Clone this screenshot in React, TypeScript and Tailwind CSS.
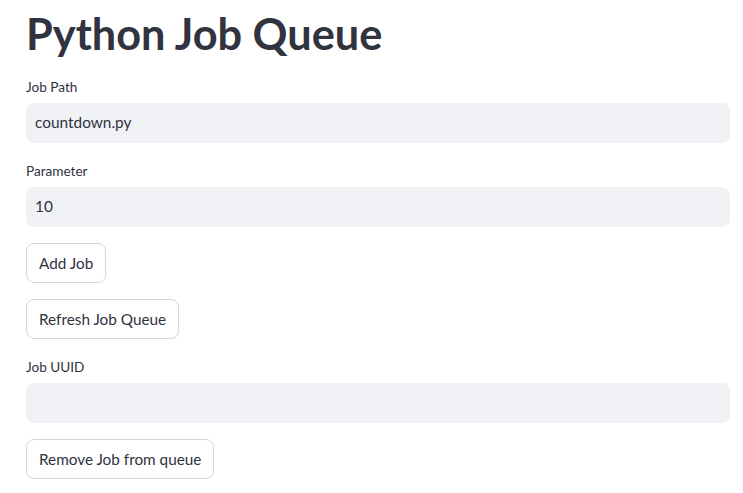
import React from 'react';

const font = { fontFamily: '"Source Sans Pro", Lato, "Noto Sans", sans-serif' };

const Label: React.FC<{ text: string; className?: string }> = ({ text, className }) => (
  <div className={`h-5 flex items-center text-[13.6px] text-[#31333f] ${className ?? ''}`}>{text}</div>
);

const Field: React.FC<{ value: string }> = ({ value }) => (
  <div className="mt-[6px] h-10 w-full rounded-lg bg-[#f0f2f6] flex items-center pl-[9px] text-[15.4px] text-[#31333f]">
    {value}
  </div>
);

const Button: React.FC<{ text: string; className?: string }> = ({ text, className }) => (
  <button
    className={`self-start h-10 px-3 rounded-lg border border-[#d6d6d9] bg-white text-[15.3px] text-[#31333f] ${className ?? ''}`}
  >
    {text}
  </button>
);

export default function App() {
  return (
    <div
      className="min-h-[493px] w-full bg-white pl-[26px] pr-[13px] flex flex-col"
      style={font}
    >
      <h1 className="h-[68px] flex items-center text-[43.3px] font-bold text-[#31333f] leading-none">
        Python Job Queue
      </h1>
      <Label text="Job Path" className="mt-[9px]" />
      <Field value="countdown.py" />
      <Label text="Parameter" className="mt-[18px]" />
      <Field value="10" />
      <Button text="Add Job" className="mt-4" />
      <Button text="Refresh Job Queue" className="mt-4" />
      <Label text="Job UUID" className="mt-[18px]" />
      <Field value="" />
      <Button text="Remove Job from queue" className="mt-4" />
    </div>
  );
}
